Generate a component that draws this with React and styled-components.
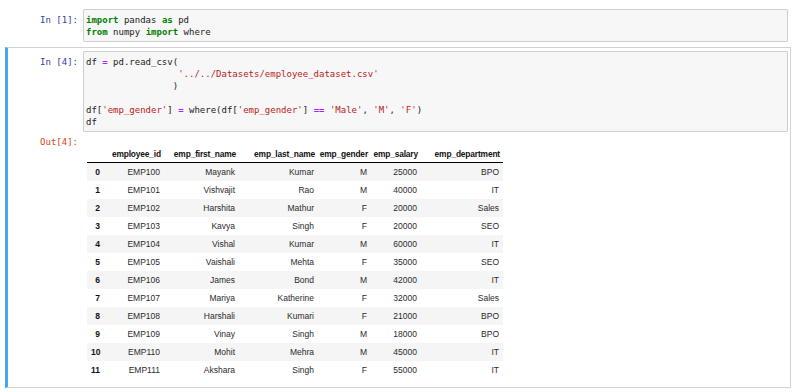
import React from 'react';
import styled, { createGlobalStyle } from 'styled-components';

const GlobalStyle = createGlobalStyle`
  html, body {
    margin: 0;
    padding: 0;
    background: #ffffff;
  }
  body {
    font-family: "Liberation Sans", Arial, sans-serif;
  }
`;

const rows = [
  ['EMP100', 'Mayank', 'Kumar', 'M', '25000', 'BPO'],
  ['EMP101', 'Vishvajit', 'Rao', 'M', '40000', 'IT'],
  ['EMP102', 'Harshita', 'Mathur', 'F', '20000', 'Sales'],
  ['EMP103', 'Kavya', 'Singh', 'F', '20000', 'SEO'],
  ['EMP104', 'Vishal', 'Kumar', 'M', '60000', 'IT'],
  ['EMP105', 'Vaishali', 'Mehta', 'F', '35000', 'SEO'],
  ['EMP106', 'James', 'Bond', 'M', '42000', 'IT'],
  ['EMP107', 'Mariya', 'Katherine', 'F', '32000', 'Sales'],
  ['EMP108', 'Harshali', 'Kumari', 'F', '21000', 'BPO'],
  ['EMP109', 'Vinay', 'Singh', 'M', '18000', 'BPO'],
  ['EMP110', 'Mohit', 'Mehra', 'M', '45000', 'IT'],
  ['EMP111', 'Akshara', 'Singh', 'F', '55000', 'IT'],
];

const columns = [
  { label: '', width: 17 },
  { label: 'employee_id', width: 60 },
  { label: 'emp_first_name', width: 75 },
  { label: 'emp_last_name', width: 79 },
  { label: 'emp_gender', width: 53 },
  { label: 'emp_salary', width: 50 },
  { label: 'emp_department', width: 82 },
];

export default function App() {
  return (
    <>
      <GlobalStyle />
      <Notebook>
        <Cell>
          <InputRow>
            <Prompt>In&nbsp;[1]:</Prompt>
            <InputArea>
              <Code>
                <Kw>import</Kw> pandas <Kw>as</Kw> pd{'\n'}
                <Kw>from</Kw> numpy <Kw>import</Kw> where
              </Code>
            </InputArea>
          </InputRow>
        </Cell>

        <Cell selected>
          <InputRow>
            <Prompt>In&nbsp;[4]:</Prompt>
            <InputArea>
              <Code>
                df <Op>=</Op> pd.read_csv({'\n'}
                {'                 '}<Str>'../../Datasets/employee_dataset.csv'</Str>{'\n'}
                {'                '}){'\n'}
                {'\n'}
                df[<Str>'emp_gender'</Str>] <Op>=</Op> where(df[<Str>'emp_gender'</Str>] <Op>==</Op> <Str>'Male'</Str>, <Str>'M'</Str>, <Str>'F'</Str>){'\n'}
                df
              </Code>
            </InputArea>
          </InputRow>

          <OutputRow>
            <Prompt out>Out[4]:</Prompt>
            <OutputArea>
              <Table>
                <colgroup>
                  {columns.map((c, i) => (
                    <col key={i} style={{ width: c.width }} />
                  ))}
                </colgroup>
                <thead>
                  <tr>
                    {columns.map((c, i) => (
                      <HeadCell key={i}>{c.label}</HeadCell>
                    ))}
                  </tr>
                </thead>
                <tbody>
                  {rows.map((r, i) => (
                    <Row key={i} striped={i % 2 === 0}>
                      <IndexCell>{i}</IndexCell>
                      {r.map((v, j) => (
                        <DataCell key={j}>{v}</DataCell>
                      ))}
                    </Row>
                  ))}
                </tbody>
              </Table>
            </OutputArea>
          </OutputRow>
        </Cell>
      </Notebook>
    </>
  );
}

const Notebook = styled.div`
  padding: 5px 9px 0 5px;
  display: flex;
  flex-direction: column;
  gap: 1px;
`;

const Cell = styled.div`
  border: 1px solid ${(p) => (p.selected ? '#d2d2d2' : 'transparent')};
  border-left: 3px solid ${(p) => (p.selected ? '#42a5f5' : 'transparent')};
  padding: 3px 2px 3px 0;
`;

const InputRow = styled.div`
  display: flex;
  align-items: flex-start;
`;

const Prompt = styled.div`
  width: 70px;
  flex: none;
  margin-right: 5px;
  padding-top: ${(p) => (p.out ? '4px' : '5px')};
  text-align: right;
  font-family: "DejaVu Sans Mono", "Liberation Mono", monospace;
  font-size: 9px;
  line-height: 12px;
  color: ${(p) => (p.out ? '#d84315' : '#303f9f')};
  white-space: nowrap;
`;

const InputArea = styled.div`
  flex: 1;
  background: #f7f7f7;
  border: 1px solid #cfcfcf;
  border-radius: 1px;
  padding: 4px 4px 3px 2px;
`;

const Code = styled.pre`
  margin: 0;
  font-family: "DejaVu Sans Mono", "Liberation Mono", monospace;
  font-size: 9px;
  line-height: 12px;
  color: #222;
  white-space: pre;
`;

const Kw = styled.span`
  color: #008000;
  font-weight: bold;
`;

const Op = styled.span`
  color: #aa22ff;
  font-weight: bold;
`;

const Str = styled.span`
  color: #ba2121;
`;

const OutputRow = styled.div`
  display: flex;
  align-items: flex-start;
  padding-bottom: 5px;
`;

const OutputArea = styled.div`
  flex: 1;
  padding: 14px 0 0 4px;
`;

const Table = styled.table`
  border-collapse: collapse;
  table-layout: fixed;
  width: 416px;
  font-family: "Liberation Sans", Arial, sans-serif;
  font-size: 8.5px;
  color: #2a2a2a;
`;

const HeadCell = styled.th`
  height: 16px;
  padding: 0 3px 0 1px;
  text-align: right;
  font-size: 8.4px;
  letter-spacing: -0.15px;
  font-weight: bold;
  color: #111;
  border-bottom: 1px solid #000;
  white-space: nowrap;
  vertical-align: middle;
`;

const Row = styled.tr`
  background: ${(p) => (p.striped ? '#f5f5f5' : 'transparent')};
`;

const IndexCell = styled.th`
  height: 18px;
  padding: 0 4px;
  text-align: right;
  font-weight: bold;
  color: #111;
`;

const DataCell = styled.td`
  height: 18px;
  padding: 0 4px;
  text-align: right;
  white-space: nowrap;
`;
